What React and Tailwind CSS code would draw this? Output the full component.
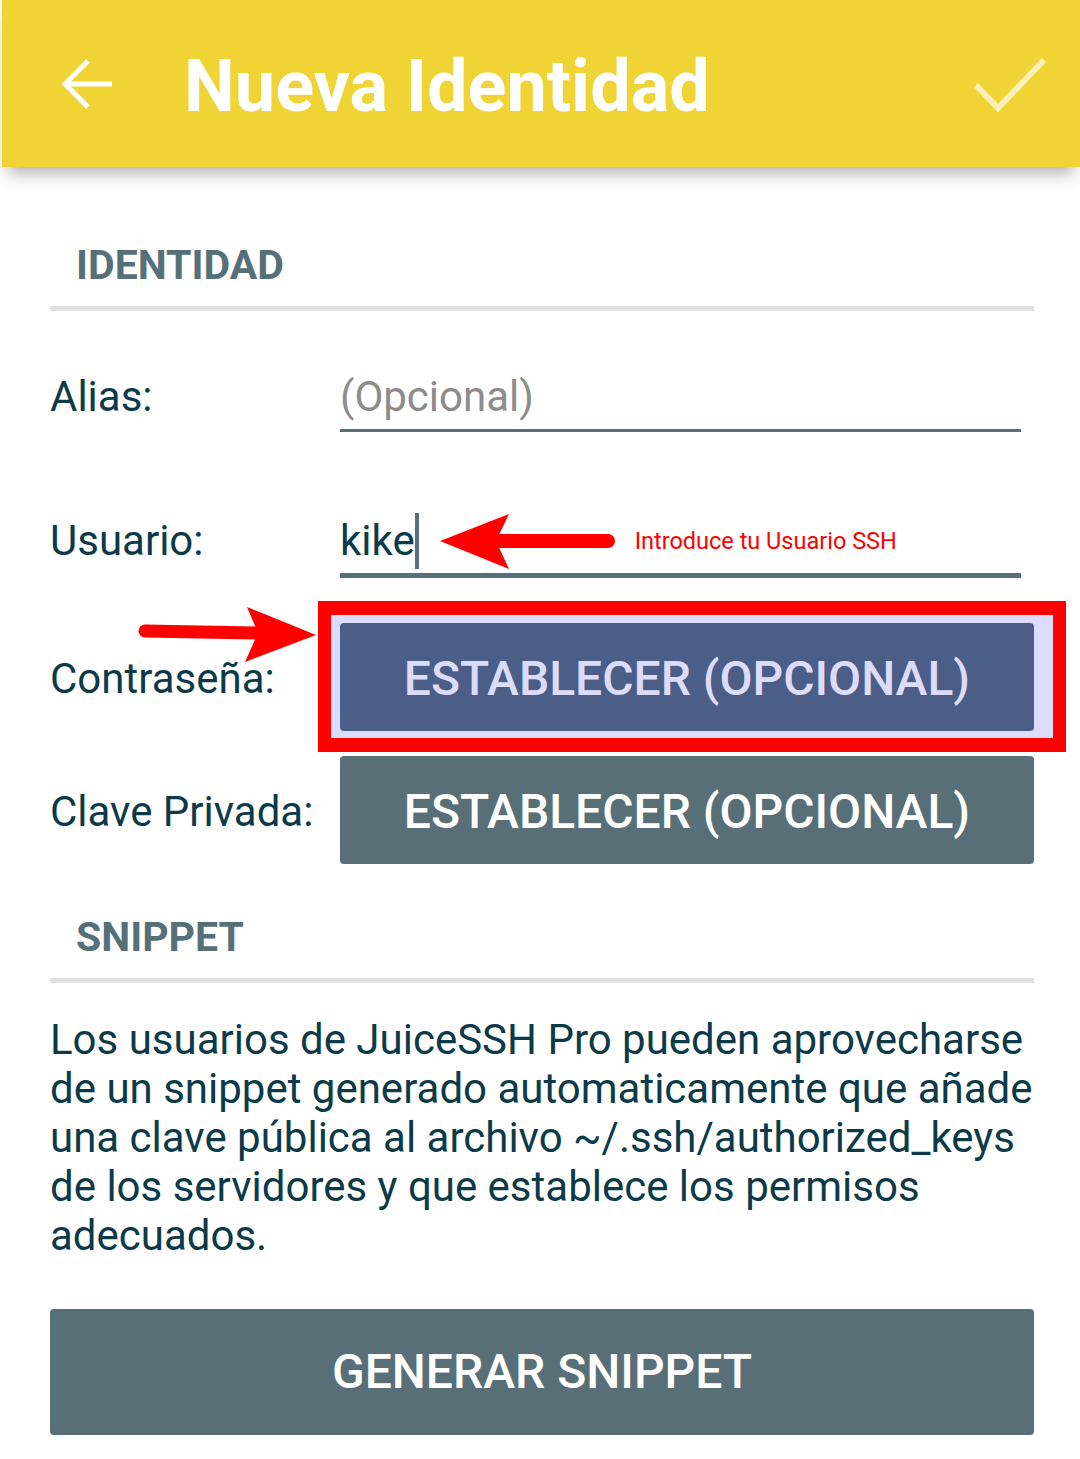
const LABEL = 'w-[290px] shrink-0 text-[42px] leading-[40px] text-[#0c3a48]';

function SectionTitle({ children, top }) {
  return (
    <div className={top}>
      <h2 className="pl-[26px] text-[41px] leading-[42px] font-bold text-[#56707a]">{children}</h2>
      <div className="mt-[20px] h-[5px] bg-[#e0e0e0]" />
    </div>
  );
}

export default function App() {
  return (
    <div className="w-[1080px] h-[1459px] bg-white font-[Roboto,sans-serif] overflow-hidden">
      <header className="relative z-10 ml-[2px] h-[167px] bg-[#f0d334] flex items-center pl-[60px] pr-[33px] shadow-[0_12px_16px_-6px_rgba(0,0,0,0.32)]">
        <svg width="50" height="50" viewBox="0 0 50 50" fill="none" stroke="white" strokeWidth="5">
          <path d="M4 25 H50" />
          <path d="M26 2 L3 25 L26 48" />
        </svg>
        <h1 className="ml-[72px] mt-[6px] text-[72px] leading-[72px] font-bold text-white">Nueva Identidad</h1>
        <svg className="ml-auto" width="74" height="56" viewBox="0 0 74 56" fill="none" stroke="white" strokeOpacity="0.65" strokeWidth="6">
          <path d="M3 29 L25 52 L71 4" />
        </svg>
      </header>

      <main className="pl-[50px] pr-[46px]">
        <SectionTitle top="mt-[77px]">IDENTIDAD</SectionTitle>

        <div className="mt-[66px] flex items-start">
          <span className={LABEL}>Alias:</span>
          <div className="flex-1 mr-[13px] pb-[12px] border-b-[3px] border-[#56707a]">
            <span className="block text-[42px] leading-[40px] text-[#8c8c8c]">(Opcional)</span>
          </div>
        </div>

        <div className="mt-[89px] flex items-start">
          <span className={LABEL}>Usuario:</span>
          <div className="flex-1 mr-[13px] pb-[12px] border-b-[5px] border-[#56707a]">
            <div className="h-[40px] flex items-center">
              <span className="text-[42px] leading-[40px] text-[#0c3a48]">kike</span>
              <span className="w-[4px] h-[56px] shrink-0 bg-[#56707a]" />
              <svg className="ml-[21px] shrink-0" width="176" height="58" viewBox="0 0 176 58">
                <line x1="56" y1="29" x2="168" y2="29" stroke="#ff0000" strokeWidth="14" strokeLinecap="round" />
                <polygon points="0,29 69,2 56,29 69,57" fill="#ff0000" />
              </svg>
              <span className="ml-[19px] text-[23.5px] leading-[22px] text-[#ff0000]">Introduce tu Usuario SSH</span>
            </div>
          </div>
        </div>

        <div className="relative mt-[23px] flex items-center">
          <span className={`${LABEL} pt-[5px]`}>Contraseña:</span>
          <div className="flex-1 -ml-[22px] -mr-[32px] border-x-[13px] border-y-[14px] border-[#ff0000] bg-[#dcdcfc] pt-[8px] pb-[7px] pl-[9px] pr-[19px]">
            <div className="h-[108px] pt-[4px] rounded-[4px] bg-[#4b5e88] flex items-center justify-center text-[48px] font-medium text-[#dcdcf8]">
              ESTABLECER (OPCIONAL)
            </div>
          </div>
          <svg className="absolute left-[88px] top-[4px]" width="180" height="58" viewBox="0 0 180 58">
            <line x1="7" y1="26" x2="121" y2="28" stroke="#ff0000" strokeWidth="13" strokeLinecap="round" />
            <polygon points="109,2 178,30 107,57 120,28" fill="#ff0000" />
          </svg>
        </div>

        <div className="mt-[4px] flex items-center">
          <span className={`${LABEL} pt-[4px]`}>Clave Privada:</span>
          <div className="flex-1 h-[108px] pt-[4px] rounded-[4px] bg-[#586f77] flex items-center justify-center text-[48px] font-medium text-white">
            ESTABLECER (OPCIONAL)
          </div>
        </div>

        <SectionTitle top="mt-[52px]">SNIPPET</SectionTitle>

        <p className="mt-[32px] text-[42px] leading-[49px] text-[#0c3a48] whitespace-nowrap">
          Los usuarios de JuiceSSH Pro pueden aprovecharse<br />
          de un snippet generado automaticamente que añade<br />
          una clave pública al archivo ~/.ssh/authorized_keys<br />
          de los servidores y que establece los permisos<br />
          adecuados.
        </p>

        <button className="mt-[49px] w-full h-[126px] rounded-[4px] bg-[#586f77] text-[48px] font-medium text-white">
          GENERAR SNIPPET
        </button>
      </main>
    </div>
  );
}
